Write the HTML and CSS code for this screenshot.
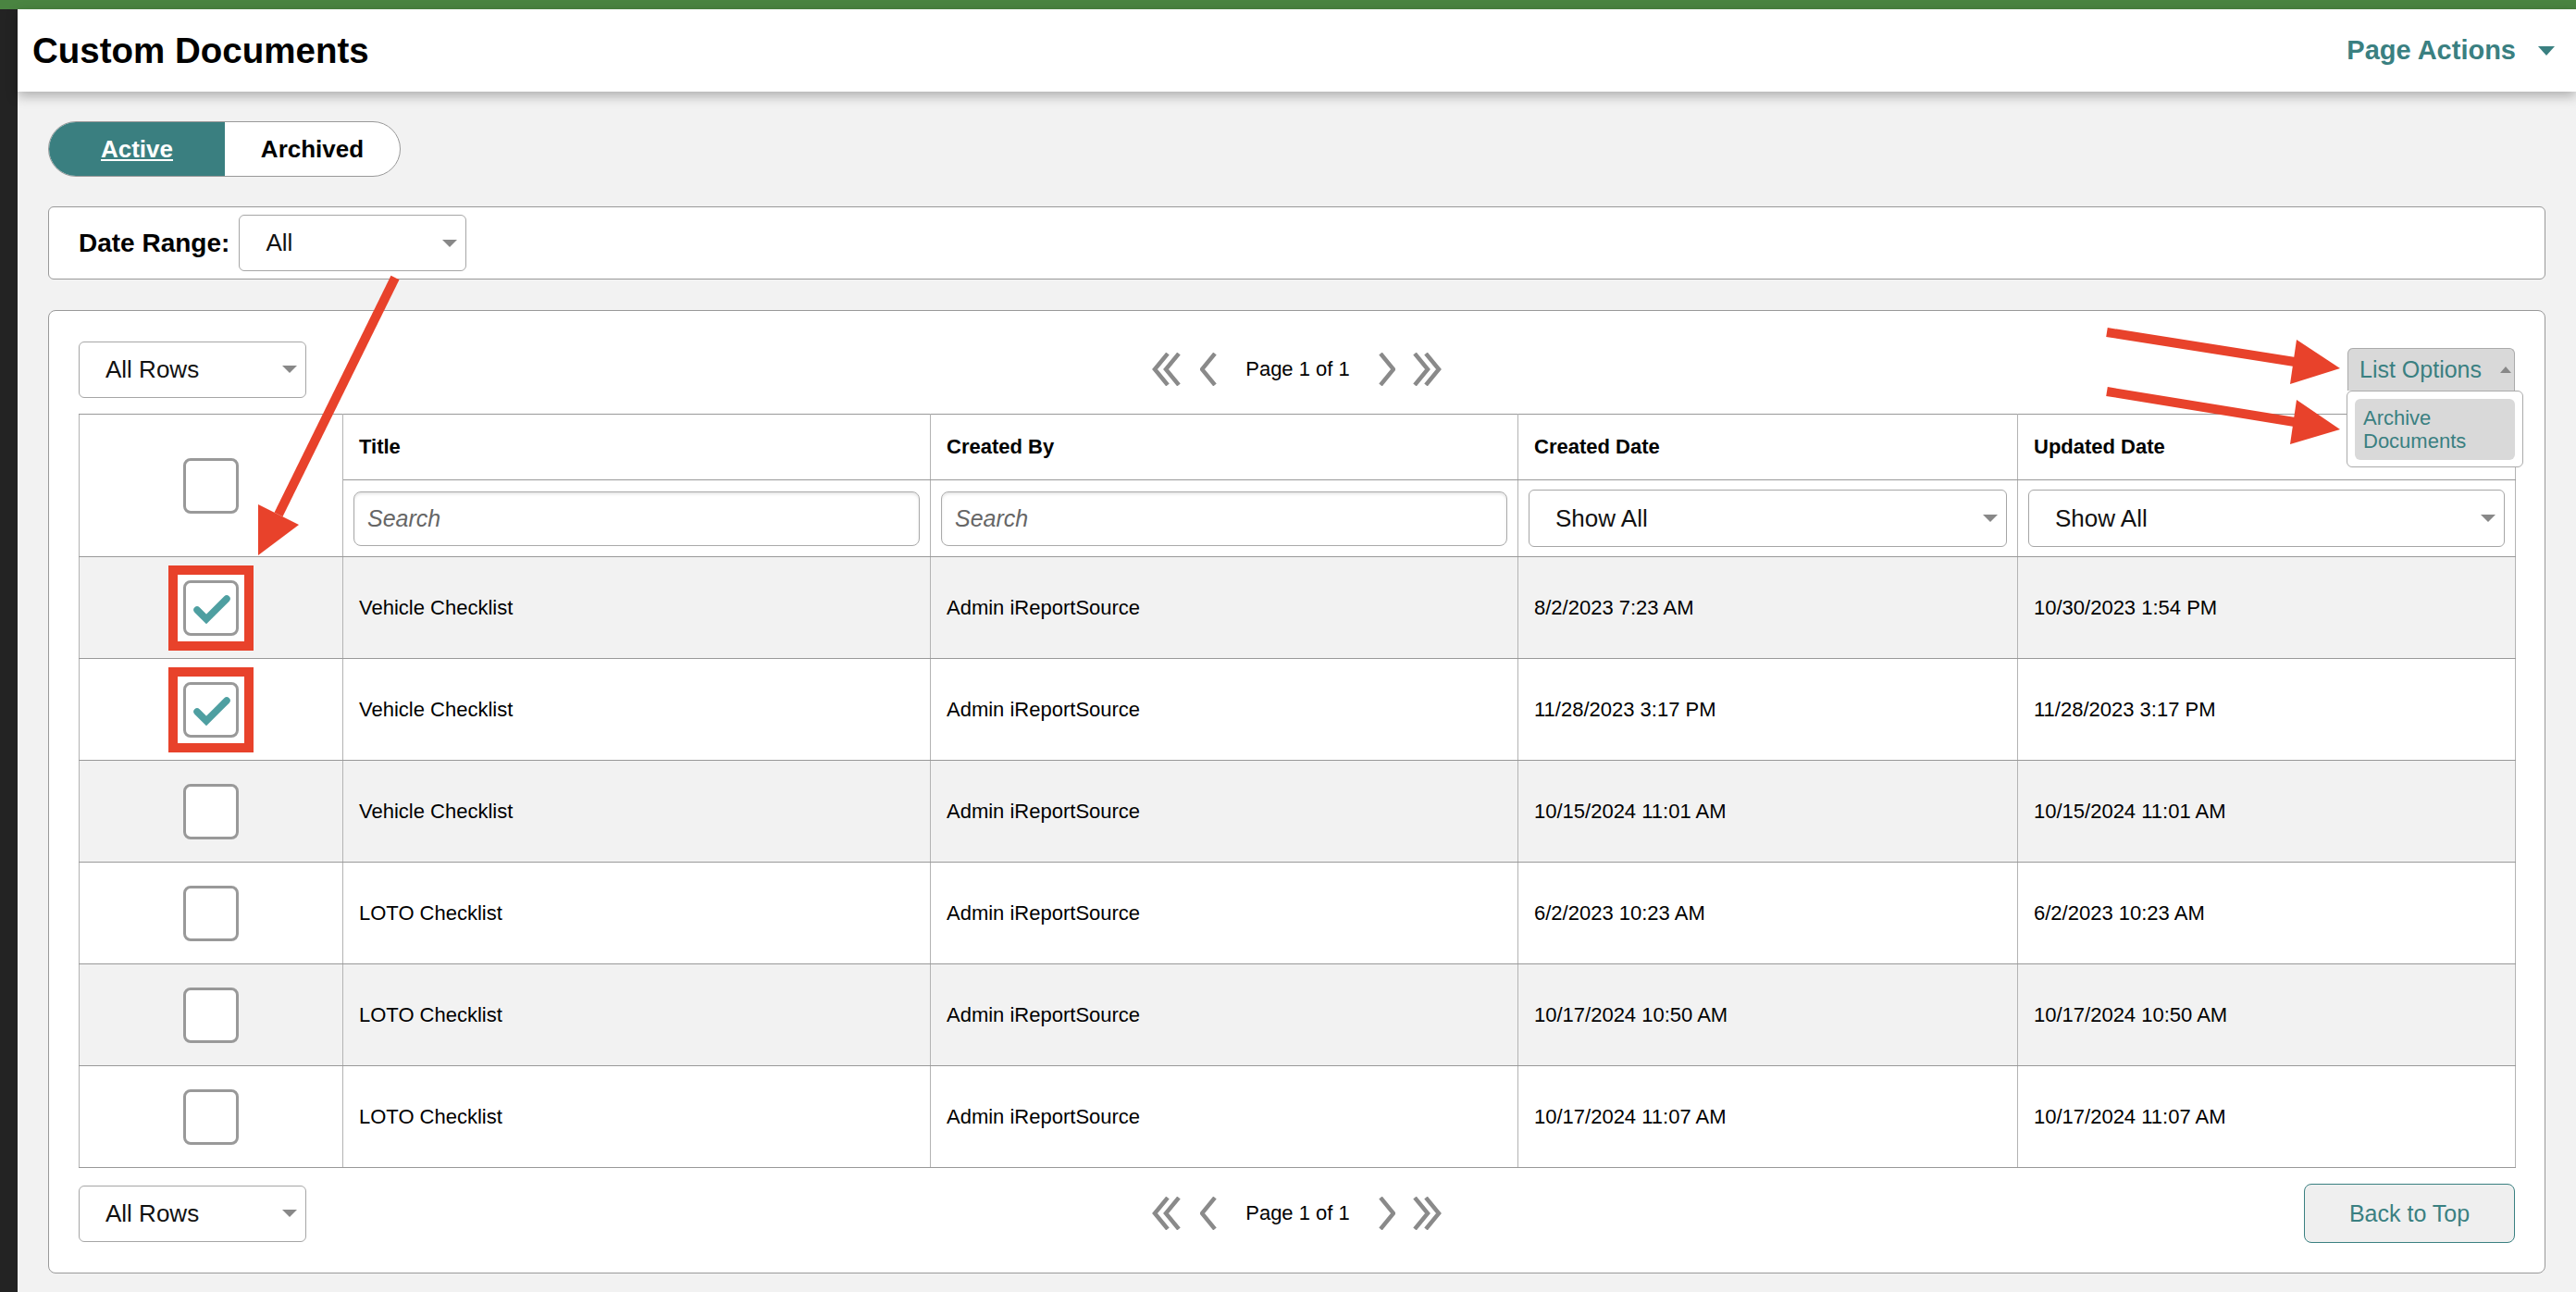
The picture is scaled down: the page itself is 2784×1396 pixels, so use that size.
FILE: index.html
```html
<!DOCTYPE html>
<html lang="en">
<head>
  <meta charset="UTF-8" />
  <meta name="viewport" content="width=device-width, initial-scale=1.0"/>
  <title>Custom Documents</title>
  <link rel="stylesheet" href="styles.css">
</head>
<body>
  <div class="topbar"></div>
  <div class="shell">
    <div class="rail"></div>
    <div class="main">
      <header class="page-header">
        <h1>Custom Documents</h1>
        <div class="page-actions">Page Actions<span class="tri-down"></span></div>
      </header>

      <div class="content">
        <div class="toggle">
          <a class="toggle-btn active">Active</a>
          <a class="toggle-btn">Archived</a>
        </div>

        <div class="filter-panel">
          <label>Date Range:</label>
          <div class="select date-select">All<span class="caret"></span></div>
        </div>

        <div class="list-panel">
          <div class="toolbar">
            <div class="select rows-select">All Rows<span class="caret"></span></div>
            <div class="pager">
              <svg class="dbl" width="32" height="36" viewBox="0 0 32 36"><polyline points="17,1 3,18 17,35"/><polyline points="29,1 15,18 29,35"/></svg>
              <svg class="sgl" width="18" height="36" viewBox="0 0 18 36"><polyline points="16,1 2,18 16,35"/></svg>
              <span class="page-label">Page 1 of 1</span>
              <svg class="sgl-r" width="18" height="36" viewBox="0 0 18 36"><polyline points="2,1 16,18 2,35"/></svg>
              <svg width="32" height="36" viewBox="0 0 32 36"><polyline points="3,1 17,18 3,35"/><polyline points="15,1 29,18 15,35"/></svg>
            </div>
            <div class="list-options">
              <div class="list-options-btn">List Options<span class="tri-up"></span></div>
              <div class="menu">
                <div class="menu-item">Archive<br>Documents</div>
              </div>
            </div>
          </div>

          <table>
            <colgroup>
              <col style="width:285px">
              <col style="width:635px">
              <col style="width:635px">
              <col style="width:540px">
              <col style="width:538px">
            </colgroup>
            <thead>
              <tr class="head1">
                <th rowspan="2" class="check"><div class="cell-center"><span class="cb"></span></div></th>
                <th>Title</th>
                <th>Created By</th>
                <th>Created Date</th>
                <th>Updated Date</th>
              </tr>
              <tr class="head2">
                <td><input class="search" type="text" placeholder="Search"></td>
                <td><input class="search" type="text" placeholder="Search"></td>
                <td><div class="select filter-select">Show All<span class="caret"></span></div></td>
                <td><div class="select filter-select">Show All<span class="caret"></span></div></td>
              </tr>
            </thead>
            <tbody>
              <tr>
                <td class="check"><div class="cell-center"><span class="hl"><span class="cb"><svg width="54" height="54" viewBox="0 0 54 54"><polyline points="12,29 22,39 44,17"/></svg></span></span></div></td>
                <td>Vehicle Checklist</td>
                <td>Admin iReportSource</td>
                <td>8/2/2023 7:23 AM</td>
                <td>10/30/2023 1:54 PM</td>
              </tr>
              <tr>
                <td class="check"><div class="cell-center"><span class="hl"><span class="cb"><svg width="54" height="54" viewBox="0 0 54 54"><polyline points="12,29 22,39 44,17"/></svg></span></span></div></td>
                <td>Vehicle Checklist</td>
                <td>Admin iReportSource</td>
                <td>11/28/2023 3:17 PM</td>
                <td>11/28/2023 3:17 PM</td>
              </tr>
              <tr>
                <td class="check"><div class="cell-center"><span class="cb"></span></div></td>
                <td>Vehicle Checklist</td>
                <td>Admin iReportSource</td>
                <td>10/15/2024 11:01 AM</td>
                <td>10/15/2024 11:01 AM</td>
              </tr>
              <tr>
                <td class="check"><div class="cell-center"><span class="cb"></span></div></td>
                <td>LOTO Checklist</td>
                <td>Admin iReportSource</td>
                <td>6/2/2023 10:23 AM</td>
                <td>6/2/2023 10:23 AM</td>
              </tr>
              <tr>
                <td class="check"><div class="cell-center"><span class="cb"></span></div></td>
                <td>LOTO Checklist</td>
                <td>Admin iReportSource</td>
                <td>10/17/2024 10:50 AM</td>
                <td>10/17/2024 10:50 AM</td>
              </tr>
              <tr>
                <td class="check"><div class="cell-center"><span class="cb"></span></div></td>
                <td>LOTO Checklist</td>
                <td>Admin iReportSource</td>
                <td>10/17/2024 11:07 AM</td>
                <td>10/17/2024 11:07 AM</td>
              </tr>
            </tbody>
          </table>

          <div class="toolbar bottom">
            <div class="select rows-select">All Rows<span class="caret"></span></div>
            <div class="pager">
              <svg class="dbl" width="32" height="36" viewBox="0 0 32 36"><polyline points="17,1 3,18 17,35"/><polyline points="29,1 15,18 29,35"/></svg>
              <svg class="sgl" width="18" height="36" viewBox="0 0 18 36"><polyline points="16,1 2,18 16,35"/></svg>
              <span class="page-label">Page 1 of 1</span>
              <svg class="sgl-r" width="18" height="36" viewBox="0 0 18 36"><polyline points="2,1 16,18 2,35"/></svg>
              <svg width="32" height="36" viewBox="0 0 32 36"><polyline points="3,1 17,18 3,35"/><polyline points="15,1 29,18 15,35"/></svg>
            </div>
            <a class="back-top">Back to Top</a>
          </div>
        </div>
      </div>
    </div>
  </div>

  <!-- red callout arrows drawn over the screenshot -->
  <svg class="annotations" width="2784" height="1396" viewBox="0 0 2784 1396">
    <line x1="427" y1="300" x2="301" y2="556"/>
    <polygon points="279,545 323,567 279,600"/>
    <line x1="2277" y1="359" x2="2480" y2="391"/>
    <polygon points="2482,367 2529,398 2475,415"/>
    <line x1="2277" y1="423" x2="2480" y2="456"/>
    <polygon points="2482,432 2529,464 2475,480"/>
  </svg>
</body>
</html>
```

FILE: styles.css
```css
:root {
  --teal: #3a8081;
  --teal-bg: #3a7f80;
  --border: #999;
  --stripe: #f2f2f2;
  --red: #e8422b;
}

* {
  box-sizing: border-box;
}

body {
  margin: 0;
  background: #f2f2f2;
  font-family: "Liberation Sans", Arial, Helvetica, sans-serif;
  color: #000;
}

.topbar {
  height: 10px;
  background: #4a8441;
}

.shell {
  display: flex;
  min-height: calc(100vh - 10px);
}

.rail {
  width: 19px;
  flex: none;
  background: #232323;
}

.main {
  flex: 1;
  min-width: 0;
}

.page-header {
  position: relative;
  z-index: 1;
  height: 89px;
  display: flex;
  align-items: center;
  justify-content: space-between;
  padding: 0 23px 0 16px;
  background: #fff;
  box-shadow: 0 5px 12px rgba(0, 0, 0, 0.28);
}

h1 {
  margin: 0;
  font-size: 38.5px;
  font-weight: bold;
}

.page-actions {
  display: flex;
  align-items: center;
  font-size: 29px;
  font-weight: bold;
  color: var(--teal);
}

.tri-down {
  margin-left: 24px;
  border-left: 9px solid transparent;
  border-right: 9px solid transparent;
  border-top: 10px solid var(--teal);
}

.content {
  padding: 32px 33px 0;
}

/* Active / Archived switch */
.toggle {
  display: inline-flex;
  height: 60px;
  border: 1px solid var(--border);
  border-radius: 30px;
  overflow: hidden;
  background: #fff;
}

.toggle-btn {
  width: 189px;
  display: flex;
  align-items: center;
  justify-content: center;
  font-size: 26px;
  font-weight: bold;
  color: #000;
}

.toggle-btn.active {
  width: 190px;
  background: var(--teal-bg);
  color: #fff;
  text-decoration: underline;
}

.filter-panel {
  margin-top: 32px;
  height: 79px;
  display: flex;
  align-items: center;
  padding: 0 32px;
  background: #fff;
  border: 1px solid var(--border);
  border-radius: 6px;
}

.filter-panel label {
  margin-right: 10px;
  font-size: 28px;
  font-weight: bold;
}

.select {
  height: 61px;
  display: flex;
  align-items: center;
  padding-left: 28px;
  background: #fff;
  border: 1px solid #a6a6a6;
  border-radius: 6px;
  font-size: 26px;
  color: #111;
}

.caret {
  margin-left: auto;
  margin-right: 9px;
  border-left: 8px solid transparent;
  border-right: 8px solid transparent;
  border-top: 8px solid #888;
}

.date-select,
.rows-select {
  width: 246px;
}

.filter-select {
  width: 100%;
  height: 62px;
}

.list-panel {
  margin-top: 33px;
  padding: 32px;
  background: #fff;
  border: 1px solid var(--border);
  border-radius: 8px;
}

.toolbar {
  display: grid;
  grid-template-columns: 1fr auto 1fr;
  align-items: center;
  height: 62px;
}

.toolbar.bottom {
  height: 64px;
  margin-top: 17px;
}

.pager {
  display: flex;
  align-items: center;
}

.pager svg {
  display: block;
  fill: none;
  stroke: #8a8a8a;
  stroke-width: 4.5;
}

.pager .dbl {
  margin-right: 20px;
}

.pager .sgl-r {
  margin-right: 18px;
}

.page-label {
  margin: 0 31px 0 31px;
  font-size: 22px;
}

.list-options {
  position: relative;
  justify-self: end;
}

.list-options-btn {
  width: 181px;
  height: 46px;
  display: flex;
  align-items: center;
  padding: 0 3px 0 12px;
  background: #d9d9d9;
  border: 1px solid #aaa;
  border-bottom: none;
  border-radius: 6px 6px 0 0;
  font-size: 25px;
  color: var(--teal);
}

.tri-up {
  margin-left: auto;
  border-left: 6.5px solid transparent;
  border-right: 6.5px solid transparent;
  border-bottom: 7px solid #888;
}

.menu {
  position: absolute;
  top: 100%;
  left: -1px;
  z-index: 2;
  width: 191px;
  padding: 8px 8px 7px;
  background: #fff;
  border: 1px solid #aaa;
  border-radius: 6px;
}

.menu-item {
  padding: 8px 9px;
  background: #d9d9d9;
  border-radius: 6px;
  font-size: 22px;
  line-height: 25px;
  color: var(--teal);
}

/* table */
table {
  width: 100%;
  margin-top: 17px;
  border-collapse: collapse;
  table-layout: fixed;
}

th, td {
  padding: 0 17px;
  border-top: 1px solid var(--border);
  border-bottom: 1px solid var(--border);
  border-left: 1px solid #b3b3b3;
  border-right: 1px solid #b3b3b3;
  text-align: left;
  vertical-align: middle;
  font-size: 22px;
}

th {
  font-weight: bold;
}

.head1 th {
  height: 71px;
}

.head2 td {
  height: 83px;
  padding: 0 11px;
}

tbody tr td {
  height: 110px;
}

tbody tr:nth-child(odd) td {
  background: var(--stripe);
}

th.check, td.check {
  padding: 0;
}

.cell-center {
  display: flex;
  justify-content: center;
  align-items: center;
}

.cb {
  width: 60px;
  height: 60px;
  display: flex;
  align-items: center;
  justify-content: center;
  background: #fff;
  border: 3px solid #999;
  border-radius: 8px;
}

.cb svg {
  display: block;
  fill: none;
  stroke: #4e9fa1;
  stroke-width: 7.5;
  stroke-linecap: round;
}

.hl {
  display: flex;
  padding: 6px;
  background: #fff;
  border: 10px solid var(--red);
}

.search {
  width: 100%;
  height: 59px;
  padding: 0 14px;
  border: 1px solid #aaa;
  border-radius: 8px;
  box-shadow: inset 0 2px 3px rgba(0, 0, 0, 0.1);
  font-family: inherit;
  font-size: 25px;
  font-style: italic;
  color: #666;
}

.search::placeholder {
  color: #666;
  font-style: italic;
}

.back-top {
  justify-self: end;
  width: 228px;
  height: 64px;
  display: flex;
  align-items: center;
  justify-content: center;
  background: #efefef;
  border: 1px solid var(--teal);
  border-radius: 8px;
  font-size: 25px;
  color: var(--teal);
}

.annotations {
  position: absolute;
  top: 0;
  left: 0;
  z-index: 5;
  pointer-events: none;
}

.annotations line {
  stroke: var(--red);
  stroke-width: 10;
}

.annotations polygon {
  fill: var(--red);
}
```
